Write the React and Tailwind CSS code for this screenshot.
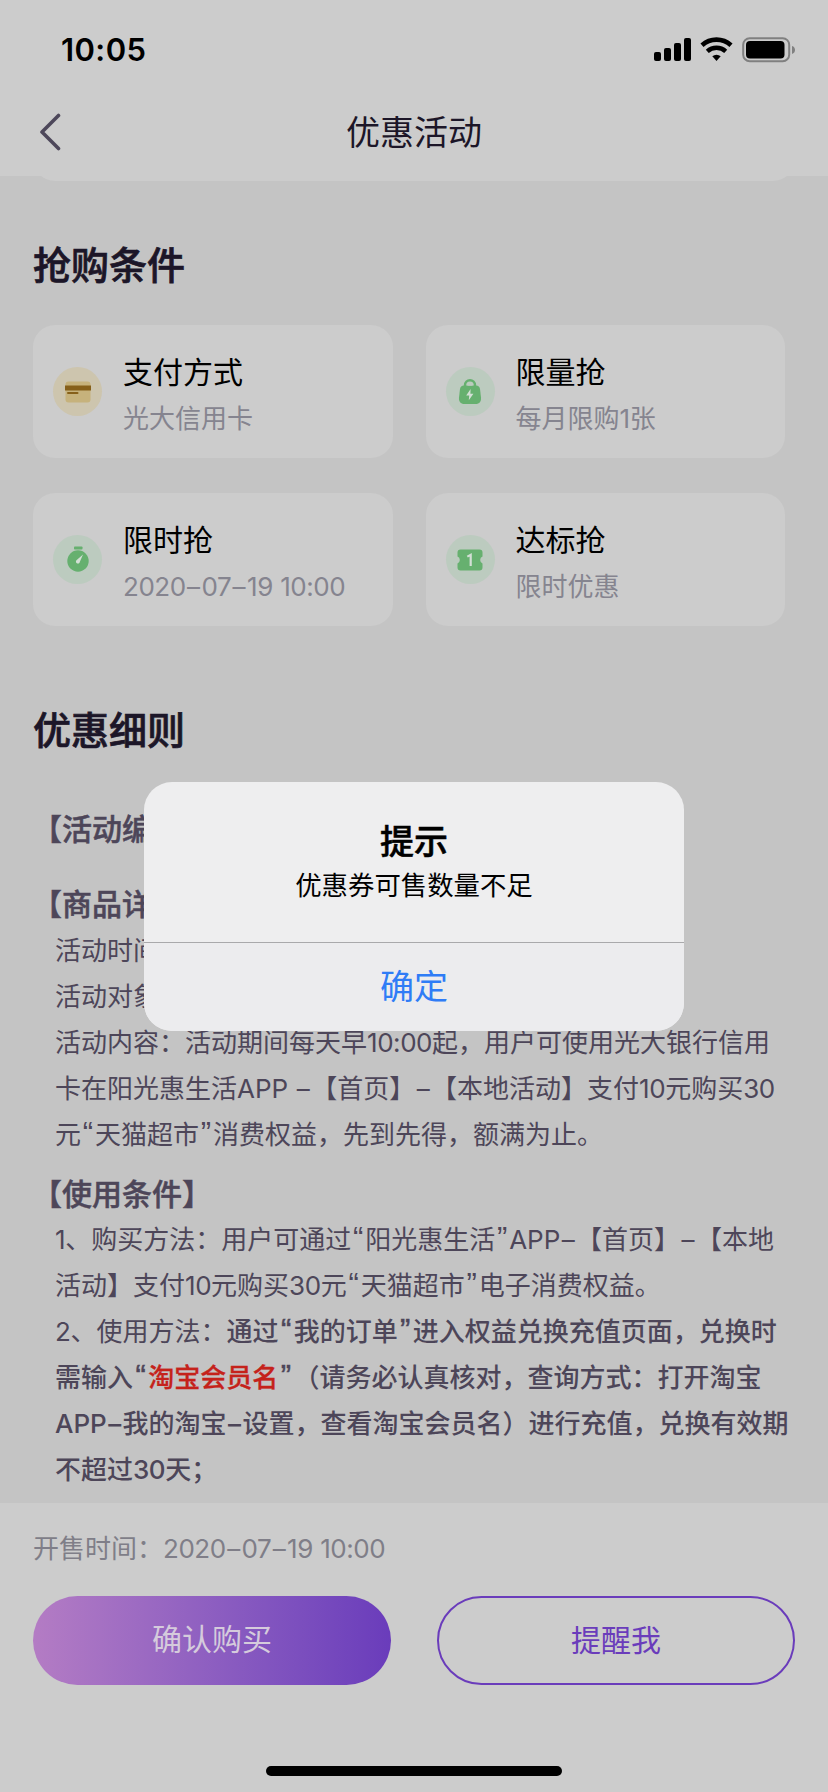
// Coupon activity page with the "not enough stock" alert on top.

const CONDITIONS = [
  { icon: CardIcon, tint: "bg-[#cdc5ae]", title: "支付方式", text: "光大信用卡" },
  { icon: BagIcon, tint: "bg-[#bccbbf]", title: "限量抢", text: "每月限购1张" },
  { icon: TimerIcon, tint: "bg-[#bccbbf]", title: "限时抢", text: "2020–07–19 10:00" },
  { icon: TicketIcon, tint: "bg-[#bccbbf]", title: "达标抢", text: "限时优惠" },
];

function CardIcon() {
  return (
    <svg width="26" height="22" viewBox="0 0 26 22">
      <rect x="0.5" y="0.5" width="25" height="21" rx="3" fill="#c6b27c" />
      <rect x="0" y="4.5" width="26" height="5" fill="#86601a" />
      <rect x="2" y="11" width="11.5" height="2" rx="1" fill="#86601a" />
    </svg>
  );
}

function BagIcon() {
  return (
    <svg width="24" height="26" viewBox="0 0 24 26">
      <path d="M7 9V6.2a5 5 0 0 1 10 0V9" fill="none" stroke="#66b06f" strokeWidth="2.4" />
      <path
        d="M6 6.5h12c2.5 0 3.6 1.3 4 3.6l1 8.4c.4 4-1.5 6.5-5.5 6.5h-11C2.5 25 .6 22.5 1 18.5l1-8.4C2.4 7.8 3.5 6.5 6 6.5z"
        fill="#66b06f"
      />
      <path d="M12.6 10 8.2 16.6h3l-.4 4.6 4.6-6.4h-3z" fill="#d3dfd5" />
      <path d="M9.2 6.7a2.9 2.9 0 0 1 5.6 0z" fill="#bccbbf" />
    </svg>
  );
}

function TimerIcon() {
  return (
    <svg width="22" height="26" viewBox="0 0 22 26" className="-mt-px">
      <rect x="7" y="0.5" width="8.5" height="3" rx="0.8" fill="#66b06f" />
      <circle cx="11" cy="15" r="10.7" fill="#66b06f" />
      <path d="M16 8.5 10 13.8a2 2 0 1 0 2.9 2z" fill="#d3dfd5" />
    </svg>
  );
}

function TicketIcon() {
  return (
    <svg width="26" height="22" viewBox="0 0 26 22">
      <path
        d="M3.5.5h19A3 3 0 0 1 25.5 3.5v4a3.8 3.8 0 0 0 0 7v4a3 3 0 0 1-3 3h-19a3 3 0 0 1-3-3v-4a3.8 3.8 0 0 0 0-7v-4A3 3 0 0 1 3.5.5z"
        fill="#66b06f"
      />
      <path d="M10.3 7.6 13.7 5.8V17" fill="none" stroke="#d3dfd5" strokeWidth="2.2" />
    </svg>
  );
}

function StatusBar() {
  return (
    <div className="flex h-[88px] items-center justify-between pt-[11px] pr-[33px] pl-[61px]">
      <span className="text-[31px] leading-none font-semibold tracking-[0.4px] text-black">10:05</span>
      <svg width="142" height="26" viewBox="0 0 142 26" className="-mr-px">
        <rect x="0" y="15" width="7" height="9" rx="2" />
        <rect x="10" y="11" width="7" height="13" rx="2" />
        <rect x="20" y="6" width="7" height="18" rx="2" />
        <rect x="30" y="1" width="7" height="23" rx="2" />
        <path d="M48 8.3a21.5 21.5 0 0 1 29 0" fill="none" stroke="#000" strokeWidth="4.6" />
        <path d="M53.3 14.3a13.6 13.6 0 0 1 18.4 0" fill="none" stroke="#000" strokeWidth="4.4" />
        <path d="M58.3 19.3a6.2 6.2 0 0 1 8.4 0L62.5 24z" />
        <rect x="89.2" y="1.2" width="46" height="23" rx="6.5" fill="none" stroke="#808080" strokeWidth="2" />
        <rect x="92" y="4" width="38.5" height="17.5" rx="4" />
        <path d="M138 9v8c2-.6 3-2.2 3-4s-1-3.4-3-4z" fill="#808080" />
      </svg>
    </div>
  );
}

// Latin digits, dashes and curly quotes get their own spacing inside Chinese text.
function Mixed({ children, strong }) {
  const quote = strong ? "w-[15.2px] [-webkit-text-stroke:0.5px]" : "w-[14px]";

  return children.split(/([0-9:]+|[“”–])/).map((part, i) => {
    if (part === "–") return <span key={i} className="mx-[1.4px]">–</span>;
    if (part === "“" || part === "”") {
      return (
        <span key={i} className={`inline-block text-center font-['Liberation_Sans',sans-serif] text-[31px] leading-none font-normal ${quote}`}>
          {part}
        </span>
      );
    }
    if (/^[0-9:]+$/.test(part)) return <span key={i} className="tracking-[-0.45px]">{part}</span>;
    return part;
  });
}

function Condition({ icon: Icon, tint, title, text }) {
  return (
    <div className="flex h-[133px] items-center gap-[21px] rounded-[22px] bg-[#cccccc] pl-5">
      <div className={`flex size-[49px] shrink-0 items-center justify-center rounded-full ${tint}`}>
        <Icon />
      </div>
      <div className="pt-1.5 whitespace-nowrap">
        <p className="text-[30px] leading-[48px] text-black">{title}</p>
        <p className="text-[26px] leading-[46px] text-[#85848f]">
          <Mixed>{text}</Mixed>
        </p>
      </div>
    </div>
  );
}

function Heading({ children }) {
  return (
    <h2 className="text-[38px] leading-[56px] font-medium text-[#1c1628] [-webkit-text-stroke:0.7px]">{children}</h2>
  );
}

function RuleTitle({ children }) {
  return <h3 className="-ml-[23px] text-[30px] leading-[46px] font-medium [-webkit-text-stroke:0.5px]">{children}</h3>;
}

function Line({ children, strong }) {
  return (
    <p>
      <Mixed strong={strong}>{children}</Mixed>
    </p>
  );
}

export default function App() {
  return (
    <div className="relative flex h-[1792px] w-[828px] flex-col overflow-hidden bg-[#c4c4c4] font-['Inter','Noto_Sans_CJK_SC',sans-serif] [text-spacing-trim:space-all]">
      <header className="h-[176px] shrink-0 bg-[#cccccc]">
        <StatusBar />
        <div className="grid h-[88px] grid-cols-[100px_1fr_100px] items-center">
          <svg width="24" height="38" viewBox="0 0 24 38" className="ml-[38px]">
            <path d="M20.5 2.5 4 19l16.5 16.5" fill="none" stroke="#4d475a" strokeWidth="3.6" strokeLinecap="round" strokeLinejoin="round" />
          </svg>
          <h1 className="pt-0.5 text-center text-[34px] leading-[48px] text-[#1c1628]">优惠活动</h1>
        </div>
      </header>

      <main className="h-[1327px] shrink-0 overflow-hidden">
        <div className="mx-[33px] flex h-[5px] items-end overflow-hidden">
          <div className="h-12 w-full shrink-0 rounded-[22px] bg-[#cccccc]" />
        </div>

        <section className="mt-14 pr-[43px] pl-[33px]">
          <Heading>抢购条件</Heading>
          <div className="mt-8 grid grid-cols-2 gap-x-[33px] gap-y-[35px]">
            {CONDITIONS.map((c) => (
              <Condition key={c.title} {...c} />
            ))}
          </div>
        </section>

        <section className="mt-[76px] pl-[33px]">
          <Heading>优惠细则</Heading>
          <div className="mt-12 pl-[22px] text-[26px] leading-[46px] whitespace-nowrap text-[#4d4659]">
            <RuleTitle>【活动编号】</RuleTitle>
            <div className="mt-[29px]">
              <RuleTitle>【商品详情】</RuleTitle>
              <div className="pt-px">
                <Line>活动时间：</Line>
                <Line>活动对象：</Line>
                <Line>活动内容：活动期间每天早10:00起，用户可使用光大银行信用</Line>
                <Line>卡在阳光惠生活APP –【首页】–【本地活动】支付10元购买30</Line>
                <Line>元“天猫超市”消费权益，先到先得，额满为止。</Line>
              </div>
            </div>
            <div className="mt-[13px]">
              <RuleTitle>【使用条件】</RuleTitle>
              <Line>1、购买方法：用户可通过“阳光惠生活”APP–【首页】–【本地</Line>
              <Line>活动】支付10元购买30元“天猫超市”电子消费权益。</Line>
              <p>
                <Mixed>2、使用方法：</Mixed>
                <b className="font-medium">
                  <Mixed strong>通过“我的订单”进入权益兑换充值页面，兑换时</Mixed>
                </b>
              </p>
              <div className="font-medium">
                <p>
                  <Mixed strong>需输入“</Mixed>
                  <span className="text-[#c5221b] [-webkit-text-stroke:0.3px]">淘宝会员名</span>
                  <Mixed strong>”（请务必认真核对，查询方式：打开淘宝</Mixed>
                </p>
                <Line strong>APP–我的淘宝–设置，查看淘宝会员名）进行充值，兑换有效期</Line>
                <Line strong>不超过30天；</Line>
              </div>
            </div>
          </div>
        </section>
      </main>

      <footer className="flex grow flex-col bg-[#cccccc] px-[33px] pt-[23px]">
        <p className="text-[26px] leading-[46px] text-[#7f7e88]">
          <Mixed>开售时间：2020–07–19 10:00</Mixed>
        </p>
        <div className="mt-6 grid grid-cols-2 gap-[46px]">
          <button className="h-[89px] rounded-full bg-linear-to-r from-[#b47cc4] to-[#6a3cbb] pb-0.5 text-[30px] text-[#d5cbdc]">
            确认购买
          </button>
          <button className="h-[89px] rounded-full border-2 border-[#6a3cbb] text-[30px] text-[#6a3cbb]">提醒我</button>
        </div>
        <div className="mt-auto mb-4 h-2.5 w-[296px] self-center rounded-full bg-black" />
      </footer>

      <div className="absolute inset-0 flex justify-center pt-[782px]">
        <div role="alertdialog" className="h-[249px] w-[540px] overflow-hidden rounded-[28px] bg-[#eeeeef] text-center text-black">
          <div className="h-[160px] pt-9">
            <p className="text-[34px] leading-[48px] font-medium [-webkit-text-stroke:0.5px]">提示</p>
            <p className="text-[26.4px] leading-[38px]">优惠券可售数量不足</p>
          </div>
          <button className="h-[89px] w-full border-t border-[#a9a9ab] bg-[#ececee] pb-0.5 text-[34px] text-[#2f7cf6]">确定</button>
        </div>
      </div>
    </div>
  );
}
